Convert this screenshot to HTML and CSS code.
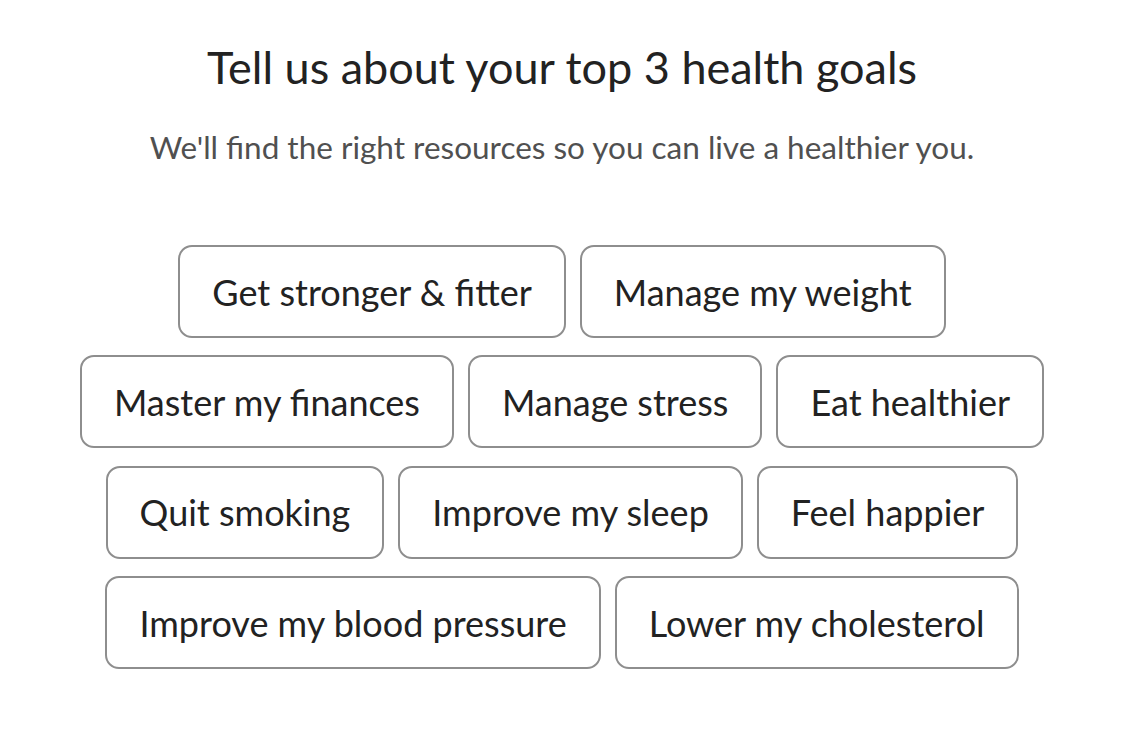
FILE: index.html
```html
<!DOCTYPE html>
<html lang="en">
<head>
<meta charset="utf-8">
<title>Health goals</title>
<link rel="stylesheet" href="styles.css">
</head>
<body>
<main class="page">
  <h1 class="title">Tell us about your top 3 health goals</h1>
  <p class="subtitle">We'll find the right resources so you can live a healthier you.</p>
  <div class="goals">
    <button class="goal">Get stronger &amp; fitter</button>
    <button class="goal">Manage my weight</button>
    <button class="goal">Master my finances</button>
    <button class="goal">Manage stress</button>
    <button class="goal">Eat healthier</button>
    <button class="goal">Quit smoking</button>
    <button class="goal">Improve my sleep</button>
    <button class="goal">Feel happier</button>
    <button class="goal">Improve my blood pressure</button>
    <button class="goal">Lower my cholesterol</button>
  </div>
</main>
</body>
</html>
```

FILE: styles.css
```css
* { box-sizing: border-box; }
html, body {
  margin: 0;
  padding: 0;
  background: #fff;
}
body {
  font-family: Lato, "Open Sans", sans-serif;
  color: #222;
}
.page {
  padding: 0 16px 0 0;
  display: flex;
  flex-direction: column;
  align-items: center;
}
.title {
  margin: 39px 0 0;
  font-size: 45px;
  font-weight: 400;
  line-height: 56px;
  color: #222;
}
.subtitle {
  margin: 32px 0 0;
  font-size: 31.5px;
  line-height: 40px;
  color: #505050;
}
.goals {
  margin-top: 78px;
  max-width: 1000px;
  display: flex;
  flex-wrap: wrap;
  justify-content: center;
}
.goal {
  margin: 0 7px 17.4px;
  height: 93px;
  padding: 0 32px;
  border: 2px solid #8e8e8e;
  border-radius: 14px;
  background: #fff;
  font-family: Lato, "Open Sans", sans-serif;
  font-size: 36px;
  color: #222;
  display: flex;
  align-items: center;
}
```
